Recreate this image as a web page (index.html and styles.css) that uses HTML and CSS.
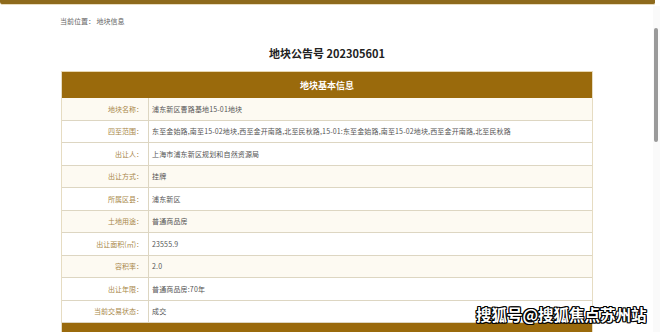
FILE: index.html
```html
<!DOCTYPE html>
<html lang="zh">
<head>
<meta charset="utf-8">
<link rel="stylesheet" href="styles.css">
</head>
<body>
<div class="topbar"></div>
<div class="page">
  <div class="crumb">当前位置：&nbsp;地块信息</div>
  <h1 class="title">地块公告号 202305601</h1>
  <div class="table">
    <div class="head">地块基本信息</div>
    <div class="row alt"><div class="lab">地块名称：</div><div class="val">浦东新区曹路基地15-01地块</div></div>
    <div class="row"><div class="lab">四至范围：</div><div class="val">东至金始路,南至15-02地块,西至金开南路,北至民秋路,15-01:东至金始路,南至15-02地块,西至金开南路,北至民秋路</div></div>
    <div class="row"><div class="lab">出让人：</div><div class="val">上海市浦东新区规划和自然资源局</div></div>
    <div class="row alt"><div class="lab">出让方式：</div><div class="val">挂牌</div></div>
    <div class="row"><div class="lab">所属区县：</div><div class="val">浦东新区</div></div>
    <div class="row alt"><div class="lab">土地用途：</div><div class="val">普通商品房</div></div>
    <div class="row"><div class="lab">出让面积(㎡)：</div><div class="val">23555.9</div></div>
    <div class="row alt"><div class="lab">容积率：</div><div class="val">2.0</div></div>
    <div class="row"><div class="lab">出让年限：</div><div class="val">普通商品房:70年</div></div>
    <div class="row"><div class="lab">当前交易状态：</div><div class="val">成交</div></div>
    <div class="foot"></div>
  </div>
</div>
<div class="scroll"><div class="thumb"></div></div>
<div class="mark">搜狐号@搜狐焦点苏州站</div>
</body>
</html>
```
FILE: styles.css
```css
html, body {
  margin: 0;
  padding: 0;
  background: #ffffff;
  overflow: hidden;
}
body {
  width: 660px;
  height: 332px;
  position: relative;
  font-family: "Noto Sans CJK SC", "Noto Sans", sans-serif;
}
.topbar {
  width: 655px;
  height: 4px;
  background: #8e6a1c;
  border-bottom: 1px solid #e8dcc0;
  border-radius: 0 0 2px 3px;
}
.page {
  width: 532px;
  margin-left: 61px;
  display: flex;
  flex-direction: column;
}
.crumb {
  font-size: 7px;
  color: #666;
  line-height: 10px;
  margin-top: 11px;
  margin-left: -1px;
}
.title {
  margin: 20px 0 0 0;
  font-size: 11px;
  line-height: 14px;
  font-weight: bold;
  color: #222;
  text-align: center;
}
.table {
  margin-top: 11px;
  border-left: 1px solid #e6dcc2;
  border-right: 1px solid #e6dcc2;
  display: flex;
  flex-direction: column;
}
.head {
  height: 26px;
  background: #9a6a0c;
  color: #fff;
  font-size: 9px;
  font-weight: bold;
  display: flex;
  align-items: center;
  justify-content: center;
  border-top: 1px solid #e8d7b0;
}
.row {
  height: 22.5px;
  display: grid;
  grid-template-columns: 87px 1fr;
  border-bottom: 1px solid #ddd6c2;
  box-sizing: border-box;
  background: #fff;
}
.row.alt {
  background: #fdfaf2;
}
.lab {
  border-right: 1px solid #ddd6c2;
  color: #a9884a;
  font-size: 7px;
  text-align: right;
  padding-right: 5px;
  display: flex;
  align-items: center;
  justify-content: flex-end;
  white-space: nowrap;
}
.val {
  color: #555;
  font-size: 7px;
  letter-spacing: 0.15px;
  padding-left: 3px;
  display: flex;
  align-items: center;
  white-space: nowrap;
}
.foot {
  height: 12px;
  background: #9a6a0c;
}
.scroll {
  position: absolute;
  left: 653px;
  top: 6px;
  width: 7px;
  height: 326px;
  background: #fafafa;
}
.thumb {
  margin: 22px 0 0 1px;
  width: 4px;
  height: 114px;
  background: #9a9a9a;
  border-radius: 2px;
}
.mark {
  position: absolute;
  left: 476px;
  top: 304px;
  font-size: 15.5px;
  font-weight: bold;
  color: #fff;
  line-height: 20px;
  text-shadow: 1px 0 0 #000, -1px 0 0 #000, 0 1px 0 #000, 0 -1px 0 #000, 1px 1px 0 #000, -1px -1px 0 #000, 1px -1px 0 #000, -1px 1px 0 #000;
}
```
